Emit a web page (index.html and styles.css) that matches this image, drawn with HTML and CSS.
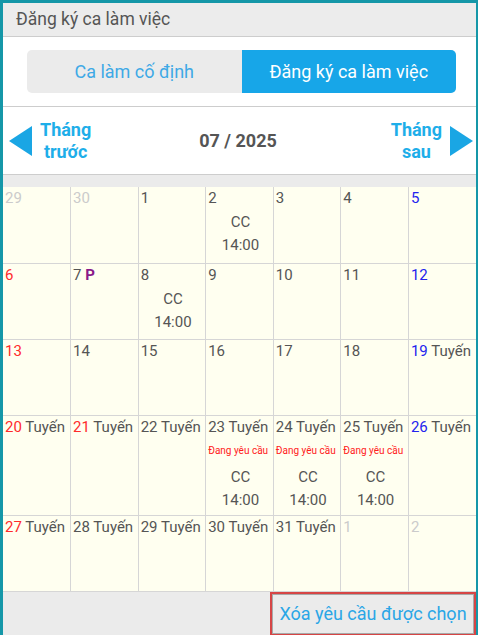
FILE: index.html
```html
<!DOCTYPE html>
<html lang="vi">
<head>
    <meta charset="UTF-8">
    <title>Đăng ký ca làm việc</title>
    <link rel="stylesheet" href="styles.css">
</head>
<body>
<div class="frame">
    <div class="title">Đăng ký ca làm việc</div>
    <div class="tabs-wrap">
        <div class="tabs">
            <div class="tab">Ca làm cố định</div>
            <div class="tab active">Đăng ký ca làm việc</div>
        </div>
    </div>
    <div class="nav">
        <div class="nav-btn">
            <span class="arrow left"></span>
            <span class="nav-text">Tháng<br>trước</span>
        </div>
        <div class="month">07 / 2025</div>
        <div class="nav-btn">
            <span class="nav-text right">Tháng<br>sau</span>
            <span class="arrow right"></span>
        </div>
    </div>
    <div class="band"></div>
    <table class="calendar">
        <tr>
            <td><span class="day other">29</span></td>
            <td><span class="day other">30</span></td>
            <td><span class="day">1</span></td>
            <td><span class="day">2</span><div class="shift">CC<br>14:00</div></td>
            <td><span class="day">3</span></td>
            <td><span class="day">4</span></td>
            <td><span class="day sat">5</span></td>
        </tr>
        <tr>
            <td><span class="day sun">6</span></td>
            <td><span class="day">7</span> <span class="leave">P</span></td>
            <td><span class="day">8</span><div class="shift">CC<br>14:00</div></td>
            <td><span class="day">9</span></td>
            <td><span class="day">10</span></td>
            <td><span class="day">11</span></td>
            <td><span class="day sat">12</span></td>
        </tr>
        <tr>
            <td><span class="day sun">13</span></td>
            <td><span class="day">14</span></td>
            <td><span class="day">15</span></td>
            <td><span class="day">16</span></td>
            <td><span class="day">17</span></td>
            <td><span class="day">18</span></td>
            <td><span class="day sat">19</span> Tuyến</td>
        </tr>
        <tr class="tall">
            <td><span class="day sun">20</span> Tuyến</td>
            <td><span class="day sun">21</span> Tuyến</td>
            <td><span class="day">22</span> Tuyến</td>
            <td><span class="day">23</span> Tuyến<div class="note">Đang yêu cầu</div><div class="shift gap">CC<br>14:00</div></td>
            <td><span class="day">24</span> Tuyến<div class="note">Đang yêu cầu</div><div class="shift gap">CC<br>14:00</div></td>
            <td><span class="day">25</span> Tuyến<div class="note">Đang yêu cầu</div><div class="shift gap">CC<br>14:00</div></td>
            <td><span class="day sat">26</span> Tuyến</td>
        </tr>
        <tr>
            <td><span class="day sun">27</span> Tuyến</td>
            <td><span class="day">28</span> Tuyến</td>
            <td><span class="day">29</span> Tuyến</td>
            <td><span class="day">30</span> Tuyến</td>
            <td><span class="day">31</span> Tuyến</td>
            <td><span class="day other">1</span></td>
            <td><span class="day other">2</span></td>
        </tr>
    </table>
    <div class="footer">
        <button class="clear-btn">Xóa yêu cầu được chọn</button>
    </div>
</div>
</body>
</html>
```

FILE: styles.css
```css
* { box-sizing: border-box; }
body {
    margin: 0;
    font-family: Roboto, "Noto Sans", Arial, sans-serif;
    color: #555;
}
.frame {
    width: 478px;
    height: 635px;
    border: 3px solid #1597a8;
    border-right-width: 2px;
    background: #ebebeb;
    display: flex;
    flex-direction: column;
}
.frame > * { flex-shrink: 0; }
.title {
    height: 34px;
    line-height: 33px;
    padding-left: 13px;
    font-size: 17.5px;
    background: #ececec;
    border-bottom: 1px solid #cdcdcd;
}
.tabs-wrap {
    background: #fff;
    padding: 13px 20px 13px 24px;
    border-bottom: 1px solid #cdcdcd;
}
.tabs {
    display: flex;
    height: 43px;
    border-radius: 5px;
    overflow: hidden;
    background: #ebebeb;
}
.tab {
    flex: 1;
    display: flex;
    align-items: center;
    justify-content: center;
    font-size: 18px;
    color: #3ea9e6;
}
.tab.active {
    background: #17a6e8;
    color: #fff;
}
.nav {
    height: 68px;
    background: #fff;
    border-bottom: 1px solid #cdcdcd;
    display: flex;
    align-items: center;
    justify-content: space-between;
    padding: 0 3px 0 6px;
}
.nav-btn {
    display: flex;
    align-items: center;
    gap: 8px;
}
.nav-text {
    font-size: 18px;
    font-weight: bold;
    line-height: 22px;
    color: #1eaee9;
    text-align: center;
}
.arrow {
    width: 0;
    height: 0;
    border-top: 15px solid transparent;
    border-bottom: 15px solid transparent;
}
.arrow.left { border-right: 23px solid #1aa6e4; }
.arrow.right { border-left: 23px solid #1aa6e4; }
.month {
    font-size: 18px;
    font-weight: bold;
    color: #555;
    margin-right: 6px;
}
.band {
    height: 12px;
    background: #ebebeb;
}
.calendar {
    width: 100%;
    border-collapse: collapse;
    table-layout: fixed;
    background: #fffff0;
}
.calendar td {
    height: 76px;
    vertical-align: top;
    padding: 1px 0 0 2px;
    border: 1px solid #d6d6d6;
    border-top: none;
    font-size: 15px;
    line-height: 20px;
    white-space: nowrap;
    overflow: hidden;
}
.calendar td:first-child { border-left: none; }
.calendar td:last-child { border-right: none; }
.calendar tr.tall td { height: 100px; }
.day.other { color: #cbcbcb; }
.day.sun { color: #ff2b2b; }
.day.sat { color: #2323ee; }
.leave {
    color: #8a1a8a;
    font-weight: bold;
}
.shift {
    text-align: center;
    line-height: 23px;
    margin-top: 3px;
}
.shift.gap { margin-top: 8px; }
.note {
    font-size: 10px;
    line-height: 14px;
    margin-top: 7px;
    color: #ff2020;
}
.footer {
    flex: 1 1 auto;
    display: flex;
    justify-content: flex-end;
    background: #ebebeb;
}
.clear-btn {
    width: 206px;
    height: 44px;
    background: #ebebeb;
    border: 2px solid #d64545;
    box-shadow: inset 0 0 0 1px #a8a8a8;
    font-family: Roboto, "Noto Sans", Arial, sans-serif;
    font-size: 18px;
    color: #2aa6e6;
    padding: 0;
}
```
